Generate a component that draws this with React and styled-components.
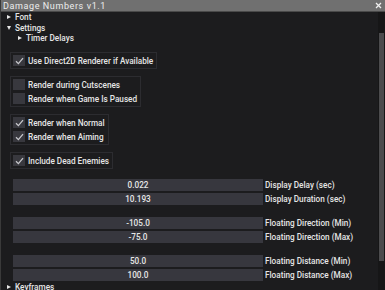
import React from "react";
import styled, { createGlobalStyle } from "styled-components";

const GlobalStyle = createGlobalStyle`
  html, body {
    margin: 0;
    padding: 0;
    background: #1c1c1e;
  }
`;

const Window = styled.div`
  width: 385px;
  height: 290px;
  display: flex;
  flex-direction: column;
  overflow: hidden;
  background: #1c1c1e;
  font-family: Roboto, "Liberation Sans", sans-serif;
  font-size: 8.2px;
  font-weight: 500;
  color: #e6e6e6;
  box-sizing: border-box;
  border-left: 1px solid #3a3a3a;
`;

const TitleBar = styled.div`
  height: 11px;
  flex: none;
  display: flex;
  align-items: center;
  justify-content: space-between;
  padding: 0 3px 0 2px;
  background: #707070;
  color: #ededed;
  font-size: 9px;
  font-weight: 400;
  letter-spacing: 0.6px;
  border-bottom: 1px solid #4a4a4a;
`;

const CloseIcon = styled.svg`
  width: 7px;
  height: 7px;
`;

const Body = styled.div`
  flex: 1;
  display: flex;
  min-height: 0;
`;

const Content = styled.div`
  flex: 1;
  padding: 0 0 0 4px;
  display: flex;
  flex-direction: column;
`;

const Scrollbar = styled.div`
  width: 7px;
  flex: none;
  background: #161617;
  padding-top: 21px;
  box-sizing: border-box;
`;

const Thumb = styled.div`
  width: 5px;
  margin-left: 1px;
  height: 228px;
  background: #4b4b4d;
`;

const TreeRow = styled.div`
  height: 10.5px;
  flex: none;
  display: flex;
  align-items: center;
  gap: 4px;
  margin-top: ${({ top = 0 }) => top}px;
  padding-left: ${({ depth }) => 2 + depth * 11}px;
`;

const Arrow = styled.span`
  width: 0;
  height: 0;
  ${({ open }) =>
    open
      ? `border-left: 2.5px solid transparent;
         border-right: 2.5px solid transparent;
         border-top: 4px solid #e6e6e6;`
      : `border-top: 2.5px solid transparent;
         border-bottom: 2.5px solid transparent;
         border-left: 4px solid #e6e6e6;`}
`;

const Group = styled.div`
  align-self: flex-start;
  flex: none;
  margin: ${({ top }) => top}px 0 0 5px;
  padding: 2px 3px 2px 2px;
  border: 1px solid #2c2c30;
  display: flex;
  flex-direction: column;
  gap: 3px;
`;

const CheckRow = styled.label`
  display: flex;
  align-items: center;
  gap: 3px;
  height: 11px;
`;

const Box = styled.span`
  width: 12px;
  height: 11px;
  background: #38383e;
  display: flex;
  align-items: center;
  justify-content: center;
`;

const Sliders = styled.div`
  margin: 10px 0 0 8px;
  display: flex;
  flex-direction: column;
  flex: none;
`;

const SliderRow = styled.div`
  display: flex;
  align-items: center;
  gap: 2px;
  height: 12px;
  margin-top: ${({ gapTop }) => gapTop}px;
`;

const Bar = styled.div`
  width: 250px;
  height: 12px;
  background: #37373e;
  display: flex;
  align-items: center;
  justify-content: center;
  color: #e6e6e6;
`;

const Check = () => (
  <svg width="9" height="8" viewBox="0 0 9 8">
    <path d="M1 4.2 L3.4 6.6 L8 1.2" fill="none" stroke="#c8c8cc" strokeWidth="1.3" />
  </svg>
);

const CheckItem = ({ checked, children }) => (
  <CheckRow>
    <Box>{checked && <Check />}</Box>
    {children}
  </CheckRow>
);

const Slider = ({ value, label, gapTop }) => (
  <SliderRow gapTop={gapTop}>
    <Bar>{value}</Bar>
    <span>{label}</span>
  </SliderRow>
);

const App = () => (
  <>
    <GlobalStyle />
    <Window>
      <TitleBar>
        <span>Damage Numbers v1.1</span>
        <CloseIcon viewBox="0 0 7 7">
          <path d="M1 1 L6 6 M6 1 L1 6" stroke="#f0f0f0" strokeWidth="1.3" />
        </CloseIcon>
      </TitleBar>
      <Body>
        <Content>
          <TreeRow depth={0}>
            <Arrow />
            <span>Font</span>
          </TreeRow>
          <TreeRow depth={0}>
            <Arrow open />
            <span>Settings</span>
          </TreeRow>
          <TreeRow depth={1}>
            <Arrow />
            <span>Timer Delays</span>
          </TreeRow>

          <Group top={8.5}>
            <CheckItem checked>Use Direct2D Renderer if Available</CheckItem>
          </Group>
          <Group top={7}>
            <CheckItem>Render during Cutscenes</CheckItem>
            <CheckItem>Render when Game Is Paused</CheckItem>
          </Group>
          <Group top={7}>
            <CheckItem checked>Render when Normal</CheckItem>
            <CheckItem checked>Render when Aiming</CheckItem>
          </Group>
          <Group top={7}>
            <CheckItem checked>Include Dead Enemies</CheckItem>
          </Group>

          <Sliders>
            <Slider value="0.022" label="Display Delay (sec)" gapTop={0} />
            <Slider value="10.193" label="Display Duration (sec)" gapTop={2} />
            <Slider value="-105.0" label="Floating Direction (Min)" gapTop={12} />
            <Slider value="-75.0" label="Floating Direction (Max)" gapTop={2} />
            <Slider value="50.0" label="Floating Distance (Min)" gapTop={12} />
            <Slider value="100.0" label="Floating Distance (Max)" gapTop={2} />
          </Sliders>

          <TreeRow depth={0} top={1}>
            <Arrow />
            <span>Keyframes</span>
          </TreeRow>
        </Content>
        <Scrollbar>
          <Thumb />
        </Scrollbar>
      </Body>
    </Window>
  </>
);

export default App;
